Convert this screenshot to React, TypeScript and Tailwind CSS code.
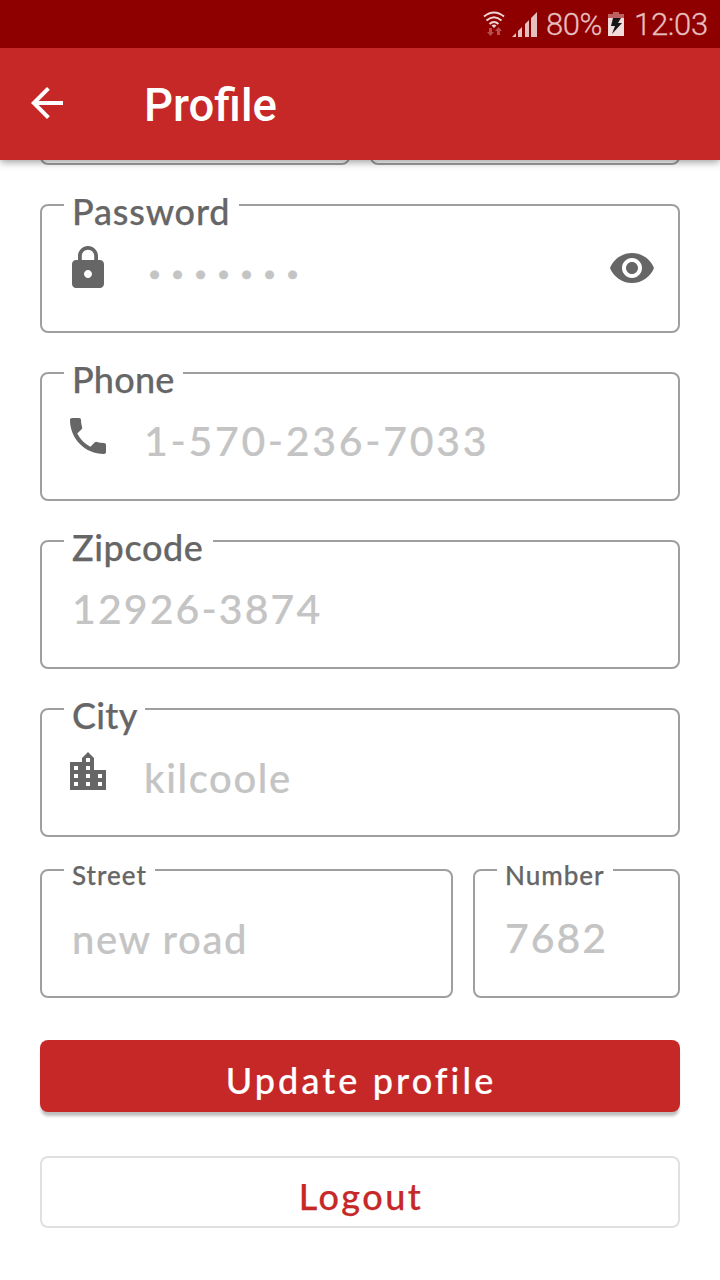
import type { ReactNode } from "react";

const LOCK =
  "M18 8h-1V6c0-2.76-2.24-5-5-5S7 3.24 7 6v2H6c-1.1 0-2 .9-2 2v10c0 1.1.9 2 2 2h12c1.1 0 2-.9 2-2V10c0-1.1-.9-2-2-2zm-6 9c-1.1 0-2-.9-2-2s.9-2 2-2 2 .9 2 2-.9 2-2 2zm3.1-9H8.9V6c0-1.71 1.39-3.1 3.1-3.1s3.1 1.39 3.1 3.1v2z";
const PHONE =
  "M6.62 10.79c1.44 2.83 3.76 5.14 6.59 6.59l2.2-2.2c.27-.27.67-.36 1.02-.24 1.12.37 2.33.57 3.57.57.55 0 1 .45 1 1V20c0 .55-.45 1-1 1-9.39 0-17-7.61-17-17 0-.55.45-1 1-1h3.5c.55 0 1 .45 1 1 0 1.25.2 2.45.57 3.57.11.35.03.74-.25 1.02l-2.2 2.2z";
const CITY =
  "M15 11V5l-3-3-3 3v2H3v14h18V11h-6zm-8 8H5v-2h2v2zm0-4H5v-2h2v2zm0-4H5V9h2v2zm6 8h-2v-2h2v2zm0-4h-2v-2h2v2zm0-4h-2V9h2v2zm0-4h-2V5h2v2zm6 12h-2v-2h2v2zm0-4h-2v-2h2v2z";
const EYE =
  "M12 4.5C7 4.5 2.73 7.61 1 12c1.73 4.39 6 7.5 11 7.5s9.27-3.11 11-7.5c-1.73-4.39-6-7.5-11-7.5zM12 17c-2.76 0-5-2.24-5-5s2.24-5 5-5 5 2.24 5 5-2.24 5-5 5zm0-8c-1.66 0-3 1.34-3 3s1.34 3 3 3 3-1.34 3-3-1.34-3-3-3z";
const BACK =
  "M20 11H7.83l5.59-5.59L12 4l-8 8 8 8 1.41-1.41L7.83 13H20v-2z";

function Icon({ d, className = "" }: { d: string; className?: string }) {
  return (
    <svg viewBox="0 0 24 24" className={`size-12 shrink-0 fill-current ${className}`}>
      <path d={d} />
    </svg>
  );
}

type FieldProps = {
  label: string;
  labelClass: string;
  icon?: string;
  trailing?: string;
  className?: string;
  children: ReactNode;
};

function Field({ label, labelClass, icon, trailing, className = "", children }: FieldProps) {
  return (
    <div className={`relative flex h-[129px] rounded-lg border-2 border-[#9f9f9f] pt-[38px] pr-[22px] pl-[22px] text-[#666] ${className}`}>
      <span className={`absolute left-[22px] h-11 bg-white pl-2 font-medium whitespace-nowrap [-webkit-text-stroke:0.25px_currentColor] ${labelClass}`}>
        {label}
      </span>
      {icon && <Icon d={icon} />}
      <div className={`h-12 flex-1 whitespace-nowrap text-[41px] leading-[48px] font-medium text-[#c4c4c4] [-webkit-text-stroke:0.2px_currentColor] ${icon ? "pl-8" : "pl-2"}`}>
        {children}
      </div>
      {trailing && <Icon d={trailing} />}
    </div>
  );
}

function StatusBar() {
  return (
    <div className="flex h-12 items-center bg-[#8e0000] pl-[483px] font-[Roboto] text-[31px] leading-[48px] text-[#e6bfbf]">
      <svg viewBox="0 0 22 26" className="h-[26px] w-[22px] shrink-0" fill="none">
        <g stroke="#f0d5d5" strokeWidth="2">
          <path d="M1 5.500Q11-2.500 21 5.500" />
          <path d="M3.500 9.500Q11 3 18.500 9.500" />
          <path d="M6.500 13Q11 9 15.500 13" />
        </g>
        <path d="M8.500 14.500Q11 12.500 13.500 14.500L11 17z" fill="#f0d5d5" />
        <path d="M6 17h3v4h2l-3.500 4L4 21h2zM14 24h3v-4h2l-3.500-4L12 20h2z" fill="#b84d4d" />
      </svg>
      <svg viewBox="0 0 25 25" className="ml-[7px] h-[25px] w-[25px] shrink-0" fill="#e6bfbf">
        <path d="M0 25l4-4v4zM6 19l4-4v10H6zM13 12l4-4v17h-4zM19 6l6-6v25h-6z" />
      </svg>
      <span className="ml-[9px] w-[57px] pt-0.5 font-light whitespace-nowrap tracking-[-0.4px] [-webkit-text-stroke:0.3px_currentColor]">80%</span>
      <svg viewBox="0 0 16 24" className="ml-[5px] h-6 w-4 shrink-0">
        <path d="M0 2h5V0h6v2h5v4H0z" fill="#bd6060" />
        <path d="M0 6h16v18H0z" fill="#f3dcdc" />
        <path d="M5 6h8l-3 5h4L4 22l3-8H3z" fill="#161616" />
      </svg>
      <span className="ml-2.5 pt-0.5 font-light whitespace-nowrap tracking-[-0.3px] [-webkit-text-stroke:0.3px_currentColor]">12:03</span>
    </div>
  );
}

export default function App() {
  return (
    <div className="h-[1280px] w-[720px] overflow-hidden bg-white font-[Lato,sans-serif]">
      <header className="relative z-10 shadow-[0_2px_8px_rgba(0,0,0,0.4)]">
        <StatusBar />
        <div className="flex h-28 items-center bg-[#c62828] pl-[23px] text-white">
          <Icon d={BACK} className="-mt-0.5" />
          <h1 className="ml-[73px] pt-1 font-[Roboto] text-[45.5px] leading-[56px] font-medium">Profile</h1>
        </div>
      </header>

      <main className="flex flex-col px-10">
        <div className="flex h-[5px] items-end gap-5 overflow-hidden">
          <div className="h-[129px] flex-1 rounded-lg border-2 border-[#9f9f9f]" />
          <div className="h-[129px] flex-1 rounded-lg border-2 border-[#9f9f9f]" />
        </div>

        <div className="mt-[39px] flex flex-col gap-[39px]">
          <Field label="Password" labelClass="top-[-17px] w-[175px] text-[36px] leading-[44px] tracking-[0.8px]" icon={LOCK} trailing={EYE}>
            <span className="block pt-[7px] pl-0.5 font-['DejaVu_Sans'] text-[29px] tracking-[5.9px] [-webkit-text-stroke:0.6px_currentColor]">•••••••</span>
          </Field>
          <Field label="Phone" labelClass="top-[-17px] w-[119px] text-[36px] leading-[44px] tracking-[0.2px]" icon={PHONE}>
            <span className="block pt-[5px] tracking-[2.7px]">1-570-236-7033</span>
          </Field>
          <Field label="Zipcode" labelClass="top-[-17px] w-[149px] text-[36px] leading-[44px] tracking-[0.6px]">
            <span className="block pt-[5px] tracking-[2.1px]">12926-3874</span>
          </Field>
          <Field label="City" labelClass="top-[-17px] w-[81px] text-[36px] leading-[44px] tracking-[0.3px]" icon={CITY}>
            <span className="block pt-1.5 text-[40px] tracking-[1.6px]">kilcoole</span>
          </Field>
        </div>

        <div className="mt-8 flex gap-5">
          <Field label="Street" labelClass="top-[-18px] w-[91px] text-[26px] leading-[44px] tracking-[1px]" className="w-[413px]">
            <span className="block pt-1.5 text-[40px] tracking-[1.6px]">new road</span>
          </Field>
          <Field label="Number" labelClass="top-[-18px] w-[116px] text-[26px] leading-[44px] tracking-[1px]" className="w-[207px]">
            <span className="block pt-[5px] tracking-[2px]">7682</span>
          </Field>
        </div>

        <button className="mt-[42px] h-[72px] rounded-lg bg-[#c62828] pt-2 pl-0.5 text-[36px] leading-[64px] font-medium tracking-[3.1px] text-white shadow-[0_5px_3px_-1px_rgba(0,0,0,0.25)] [-webkit-text-stroke:0.2px_currentColor]">
          Update profile
        </button>
        <button className="mt-11 h-[72px] rounded-lg border-2 border-[#e0e0e0] pt-2 pl-0.5 text-[36px] leading-[60px] font-medium tracking-[2.4px] text-[#c62828] [-webkit-text-stroke:0.25px_currentColor]">
          Logout
        </button>
      </main>
    </div>
  );
}
